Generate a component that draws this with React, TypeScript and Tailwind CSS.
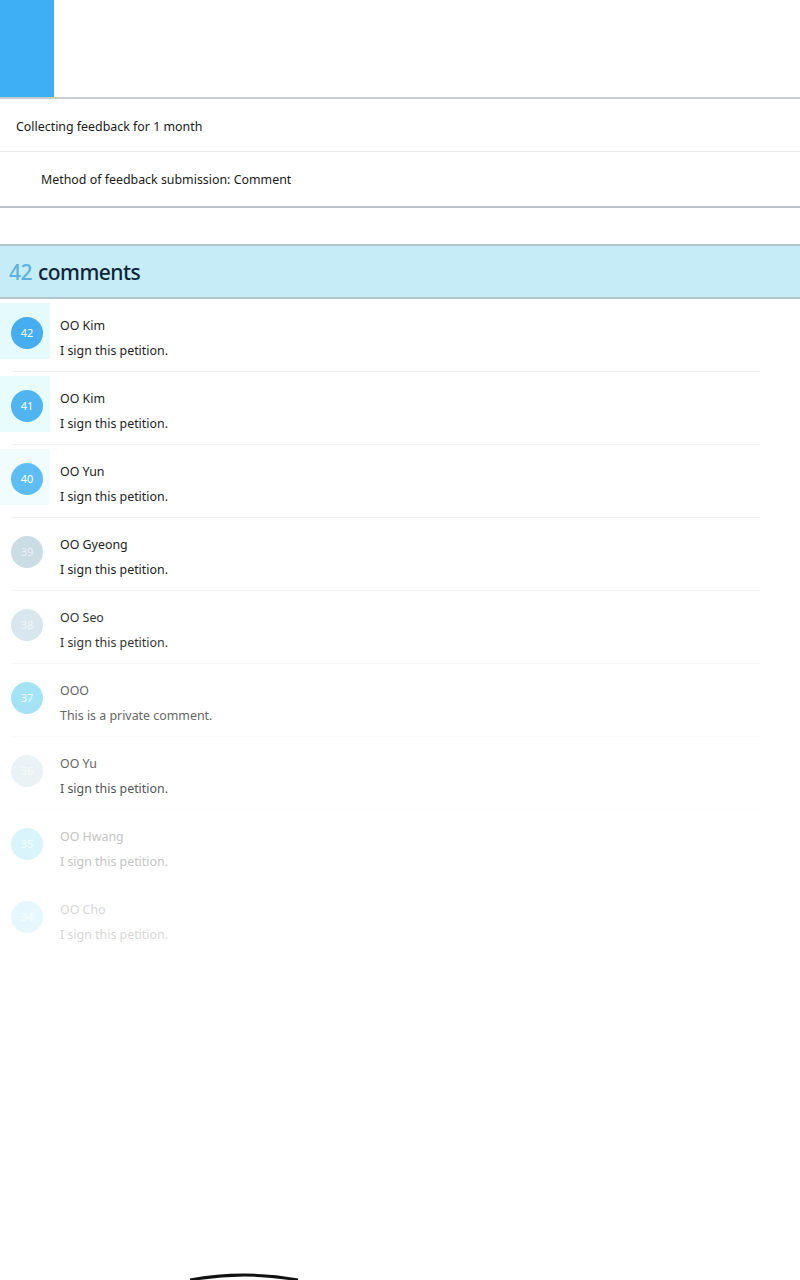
import React from "react";

type C = {
  n: number;
  name: string;
  text: string;
  circle: string;
  num: string;
  hl: string;
  nameColor: string;
  textColor: string;
  sep: string;
};

const comments: C[] = [
  { n: 42, name: "OO Kim", text: "I sign this petition.", circle: "bg-[#46adf0]", num: "text-white", hl: "bg-[#e4fafd]", nameColor: "text-[#1e1e1e]", textColor: "text-[#1e1e1e]", sep: "bg-[#efefef]" },
  { n: 41, name: "OO Kim", text: "I sign this petition.", circle: "bg-[#50b4f1]", num: "text-white", hl: "bg-[#e8fbfd]", nameColor: "text-[#1e1e1e]", textColor: "text-[#1e1e1e]", sep: "bg-[#f1f1f1]" },
  { n: 40, name: "OO Yun", text: "I sign this petition.", circle: "bg-[#5dbdf4]", num: "text-white", hl: "bg-[#f0fcfe]", nameColor: "text-[#222]", textColor: "text-[#222]", sep: "bg-[#f3f3f3]" },
  { n: 39, name: "OO Gyeong", text: "I sign this petition.", circle: "bg-[#cadde5]", num: "text-[#e8f1f5]", hl: "bg-white", nameColor: "text-[#222]", textColor: "text-[#222]", sep: "bg-[#f5f5f5]" },
  { n: 38, name: "OO Seo", text: "I sign this petition.", circle: "bg-[#d8e7ed]", num: "text-[#eef5f8]", hl: "bg-white", nameColor: "text-[#333]", textColor: "text-[#333]", sep: "bg-[#f8f8f8]" },
  { n: 37, name: "OOO", text: "This is a private comment.", circle: "bg-[#a4e2f6]", num: "text-[#eefafe]", hl: "bg-white", nameColor: "text-[#666]", textColor: "text-[#666]", sep: "bg-[#fafafa]" },
  { n: 36, name: "OO Yu", text: "I sign this petition.", circle: "bg-[#ebf2f5]", num: "text-[#f6f9fa]", hl: "bg-white", nameColor: "text-[#666]", textColor: "text-[#555]", sep: "bg-[#fcfcfc]" },
  { n: 35, name: "OO Hwang", text: "I sign this petition.", circle: "bg-[#daf4fb]", num: "text-[#f3fcfe]", hl: "bg-white", nameColor: "text-[#c4c4c4]", textColor: "text-[#c4c4c4]", sep: "bg-[#fdfdfd]" },
  { n: 34, name: "OO Cho", text: "I sign this petition.", circle: "bg-[#e6f8fd]", num: "text-[#f7fdfe]", hl: "bg-white", nameColor: "text-[#d6d6d6]", textColor: "text-[#d6d6d6]", sep: "bg-white" },
];

export default function App() {
  return (
    <div
      className="w-[800px] h-[1280px] overflow-hidden bg-white flex flex-col"
      style={{ fontFamily: '"Noto Sans", "Open Sans", sans-serif' }}
    >
      <div className="h-[97px] flex shrink-0">
        <div className="w-[54px] h-full bg-[#3eaef5]" />
      </div>
      <div className="h-[2px] bg-[#c6cccf] shrink-0" />
      <div className="h-[53px] flex items-center pl-[16px] pt-[4px] text-[12.4px] text-[#1a1a1a] border-b border-[#ececec] shrink-0">
        Collecting feedback for 1 month
      </div>
      <div className="h-[56px] flex items-center pl-[41px] pt-[2px] text-[12.4px] text-[#1a1a1a] border-b-2 border-[#bcc5c9] shrink-0">
        Method of feedback submission: Comment
      </div>
      <div className="h-[36px] shrink-0" />
      <div className="h-[55px] flex items-center pl-[9px] pt-[2px] bg-[#c6ecf7] border-y-2 border-[#b3c4cb] shrink-0 text-[21px] font-medium tracking-tight">
        <span className="text-[#5bb1dd]">42</span>
        <span className="text-[#0c2538] ml-[6px]">comments</span>
      </div>
      <div className="flex flex-col">
        {comments.map((c) => (
          <div key={c.n} className="h-[73px] flex flex-col shrink-0">
            <div className="flex flex-1">
              <div className={`w-[50px] h-[56px] mt-[4px] ${c.hl} pl-[11px] pt-[14px]`}>
                <div className={`w-[32px] h-[32px] rounded-full ${c.circle} ${c.num} flex items-center justify-center text-[11px]`}>
                  {c.n}
                </div>
              </div>
              <div className="ml-[10px] flex flex-col pt-[18px]">
                <div className={`text-[12.4px] leading-[18px] ${c.nameColor}`}>{c.name}</div>
                <div className={`text-[12.4px] leading-[18px] mt-[7px] ${c.textColor}`}>{c.text}</div>
              </div>
            </div>
            <div className={`h-px ml-[12px] w-[748px] ${c.sep}`} />
          </div>
        ))}
      </div>
      <div className="flex-1" />
      <div className="h-[8px] pl-[188px] shrink-0">
        <svg width="112" height="8" viewBox="0 0 112 8">
          <path d="M2 8 Q56 -2 110 8" fill="none" stroke="#111" strokeWidth="3" />
        </svg>
      </div>
    </div>
  );
}
